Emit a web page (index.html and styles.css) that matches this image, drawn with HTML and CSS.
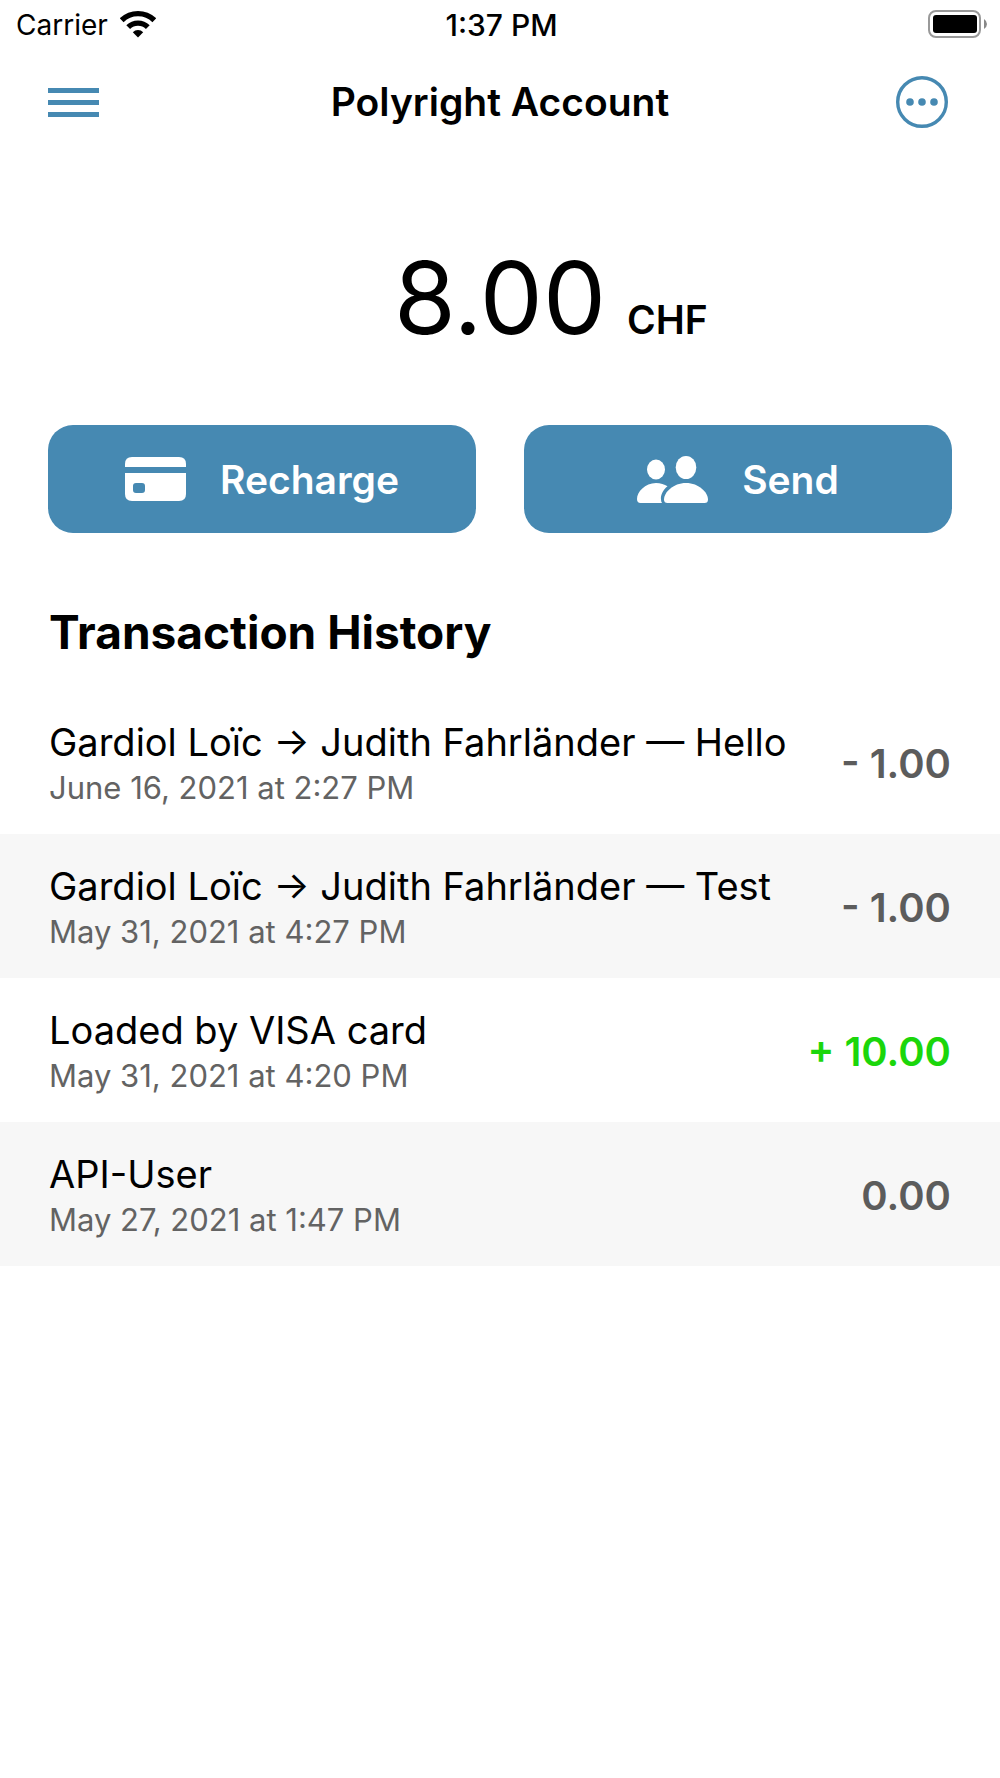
FILE: index.html
```html
<!DOCTYPE html>
<html lang="en">
<head>
  <meta charset="utf-8">
  <meta name="viewport" content="width=device-width, initial-scale=1">
  <title>Polyright Account</title>
  <link rel="stylesheet" href="styles.css">
</head>
<body>
  <div class="status-bar">
    <div class="carrier">
      <span>Carrier</span>
      <svg class="wifi" width="36" height="28" viewBox="0 0 36 28" aria-hidden="true">
        <g fill="none" stroke="#000" stroke-width="5.4">
          <path d="M1.7 10.2A23.5 23.5 0 0 1 34.3 10.2"/>
          <path d="M8.2 17.1A14 14 0 0 1 27.8 17.1"/>
        </g>
        <path d="M18 27.5L12.8 22.2A7.4 7.4 0 0 1 23.2 22.2Z"/>
      </svg>
    </div>
    <time class="clock">1:37 PM</time>
    <svg class="battery" width="59" height="28" viewBox="0 0 59 28" aria-hidden="true">
      <rect x="1" y="1" width="51" height="26" rx="7" fill="none" stroke="#999" stroke-width="2"/>
      <rect x="5" y="5" width="44" height="18" rx="3"/>
      <path d="M56 9Q59 11 59 14Q59 17 56 19Z" fill="#888"/>
    </svg>
  </div>

  <header class="nav-bar">
    <button class="icon-button" type="button" aria-label="Menu">
      <svg width="52" height="52" viewBox="0 0 52 52" fill="currentColor">
        <path d="M0 12h51v5H0zM0 24h51v5H0zM0 36h51v5H0z"/>
      </svg>
    </button>
    <h1 class="nav-title">Polyright Account</h1>
    <button class="icon-button" type="button" aria-label="More">
      <svg width="52" height="52" viewBox="0 0 52 52" fill="currentColor">
        <circle cx="26" cy="26" r="24.3" fill="none" stroke="currentColor" stroke-width="3.4"/>
        <circle cx="14" cy="26" r="3.8"/>
        <circle cx="26" cy="26" r="3.8"/>
        <circle cx="38" cy="26" r="3.8"/>
      </svg>
    </button>
  </header>

  <main>
    <div class="balance">
      <span class="balance-value">8.00</span>
      <span class="balance-currency">CHF</span>
    </div>

    <div class="actions">
      <button class="action" type="button">
        <svg width="61" height="44" viewBox="0 0 61 44" fill="#fff" aria-hidden="true">
          <path d="M0 10V7Q0 0 7 0H54Q61 0 61 7V10Z"/>
          <path fill-rule="evenodd" d="M0 16H61V37Q61 44 54 44H7Q0 44 0 37ZM11 26Q8 26 8 29V33Q8 36 11 36H17Q20 36 20 33V29Q20 26 17 26Z"/>
        </svg>
        <span>Recharge</span>
      </button>
      <button class="action" type="button">
        <svg width="71" height="47" viewBox="0 0 71 47" fill="#fff" aria-hidden="true">
          <ellipse cx="19" cy="13.5" rx="9" ry="10"/>
          <ellipse cx="49" cy="11.5" rx="10.3" ry="11.5"/>
          <path d="M3.5 47Q0 47 0 43C0 36 8 27 19 27C23.5 27 27.5 28.3 30.5 30.3C25.5 34.5 23.5 39.5 24 43.5Q24 45.5 25 47Z"/>
          <path d="M30.5 47Q27 47 27 43.5C27 36.5 36 27 49 27C62 27 71 36.5 71 43.5Q71 47 67.5 47Z"/>
        </svg>
        <span>Send</span>
      </button>
    </div>

    <section>
      <h2 class="section-title">Transaction History</h2>
      <ul class="transactions">
        <li class="transaction">
          <div class="details">
            <div class="label">Gardiol Loïc → Judith Fahrländer — Hello</div>
            <div class="date">June 16, 2021 at 2:27 PM</div>
          </div>
          <div class="amount">- 1.00</div>
        </li>
        <li class="transaction">
          <div class="details">
            <div class="label">Gardiol Loïc → Judith Fahrländer — Test</div>
            <div class="date">May 31, 2021 at 4:27 PM</div>
          </div>
          <div class="amount">- 1.00</div>
        </li>
        <li class="transaction">
          <div class="details">
            <div class="label">Loaded by VISA card</div>
            <div class="date">May 31, 2021 at 4:20 PM</div>
          </div>
          <div class="amount credit">+ 10.00</div>
        </li>
        <li class="transaction">
          <div class="details">
            <div class="label">API-User</div>
            <div class="date">May 27, 2021 at 1:47 PM</div>
          </div>
          <div class="amount">0.00</div>
        </li>
      </ul>
    </section>
  </main>
</body>
</html>
```
FILE: styles.css
```css
* {
  box-sizing: border-box;
}

body {
  margin: 0;
  background: #fff;
  color: #000;
  font-family: Inter, "Liberation Sans", sans-serif;
}

button {
  margin: 0;
  padding: 0;
  border: 0;
  background: none;
  font: inherit;
  cursor: pointer;
}

svg {
  display: block;
  flex: none;
}

.status-bar {
  display: grid;
  grid-template-columns: 1fr auto 1fr;
  align-items: center;
  height: 50px;
  padding: 0 13px 0 16px;
  font-size: 28px;
  line-height: 50px;
}

.carrier {
  display: flex;
  align-items: center;
  gap: 12px;
}

.wifi {
  margin-bottom: 2px;
}

.clock {
  font-size: 30px;
  font-weight: 500;
}

.battery {
  justify-self: end;
  margin-bottom: 2px;
}

.nav-bar {
  display: flex;
  align-items: center;
  justify-content: space-between;
  height: 104px;
  padding: 0 48px;
}

.icon-button {
  width: 56px;
  color: #4689b2;
}

.nav-title {
  margin: 0;
  font-size: 39px;
  font-weight: 600;
  line-height: 48px;
}

.balance {
  display: grid;
  grid-template-columns: 1fr auto 1fr;
  align-items: baseline;
  column-gap: 21px;
  padding: 80px 48px 63px;
}

.balance-value {
  grid-column: 2;
  font-size: 100px;
  line-height: 128px;
}

.balance-currency {
  font-size: 39px;
  font-weight: 600;
}

.actions {
  display: grid;
  grid-template-columns: 1fr 1fr;
  gap: 48px;
  padding: 0 48px;
}

.action {
  display: flex;
  align-items: center;
  justify-content: center;
  gap: 34px;
  height: 108px;
  border-radius: 25px;
  background: #4689b2;
  color: #fff;
  font-size: 39px;
  font-weight: 600;
}

.section-title {
  margin: 0;
  padding: 69px 49px 28px;
  font-size: 46px;
  font-weight: 700;
  line-height: 60px;
}

.transactions {
  margin: 0;
  padding: 0;
  list-style: none;
}

.transaction {
  display: flex;
  align-items: center;
  justify-content: space-between;
  gap: 24px;
  padding: 28px 49px 24px;
}

.transaction:nth-child(even) {
  background: #f7f7f7;
}

.label {
  font-size: 38px;
  line-height: 48px;
}

.date {
  color: #636363;
  font-size: 31px;
  line-height: 44px;
}

.amount {
  flex: none;
  color: #5c5c5c;
  font-size: 40px;
  font-weight: 600;
  line-height: 48px;
}

.credit {
  color: #1bd60b;
}
```
